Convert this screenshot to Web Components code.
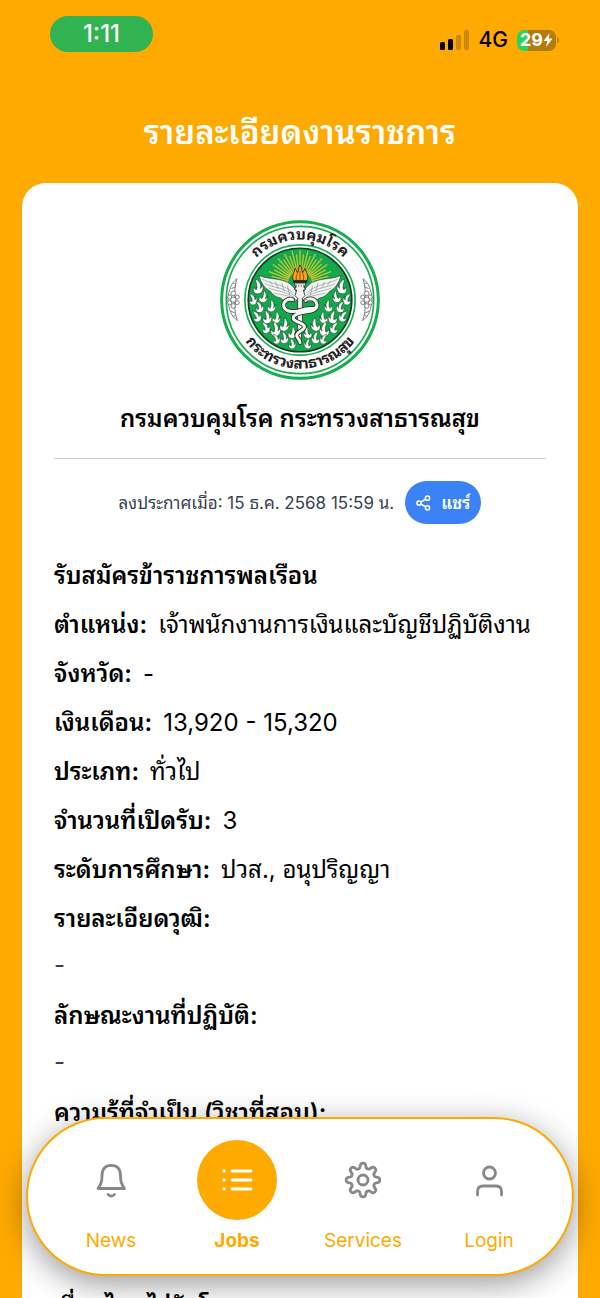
<!DOCTYPE html>
<html lang="th">
<head>
<meta charset="utf-8">
<meta name="viewport" content="width=device-width, initial-scale=1">
<title>รายละเอียดงานราชการ</title>
<style>
  body {
    margin: 0;
    --brand: #ffaa00;
    --share: #3b82f6;
    --muted: #888888;
    color: #000000;
    font-family: Inter, "Noto Sans Thai Looped", "Noto Looped Thai", Loma, "Noto Sans Thai", "Noto Sans", sans-serif;
  }
</style>
</head>
<body>
<app-screen>
  <status-bar slot="header" time="1:11" network="4G" battery="29"></status-bar>
  <page-title slot="header">รายละเอียดงานราชการ</page-title>

  <job-card>
    <dept-emblem slot="logo"></dept-emblem>
    <span slot="org">กรมควบคุมโรค กระทรวงสาธารณสุข</span>
    <span slot="posted">ลงประกาศเมื่อ: 15 ธ.ค. 2568 15:59 น.</span>
    <share-button slot="share">แชร์</share-button>
    <span slot="heading">รับสมัครข้าราชการพลเรือน</span>

    <job-fact label="ตำแหน่ง:">เจ้าพนักงานการเงินและบัญชีปฏิบัติงาน</job-fact>
    <job-fact label="จังหวัด:">-</job-fact>
    <job-fact label="เงินเดือน:">13,920 - 15,320</job-fact>
    <job-fact label="ประเภท:">ทั่วไป</job-fact>
    <job-fact label="จำนวนที่เปิดรับ:">3</job-fact>
    <job-fact label="ระดับการศึกษา:">ปวส., อนุปริญญา</job-fact>

    <job-section label="รายละเอียดวุฒิ:">-</job-section>
    <job-section label="ลักษณะงานที่ปฏิบัติ:">-</job-section>
    <job-section label="ความรู้ที่จำเป็น (วิชาที่สอบ):">-</job-section>
    <job-section label="ทักษะ/สมรรถนะ:">-</job-section>
    <job-section label="เงื่อนไข : ไม่รับโอน">-</job-section>
  </job-card>

  <tab-bar slot="nav">
    <tab-item icon="bell" href="#news">News</tab-item>
    <tab-item icon="list" href="#jobs" active>Jobs</tab-item>
    <tab-item icon="gear" href="#services">Services</tab-item>
    <tab-item icon="person" href="#login">Login</tab-item>
  </tab-bar>
</app-screen>

<script>
// Attaches an open shadow root holding the given markup.
const render = (host, html) => {
  host.attachShadow({ mode: "open" }).innerHTML = html;
};

customElements.define(
  "app-screen",
  class AppScreen extends HTMLElement {
    constructor() {
      super();
      render(this, `
        <style>
          :host {
            display: block;
            position: relative;
            height: 100vh;
            overflow: hidden;
            background: var(--brand);
          }
          .scroll {
            box-sizing: border-box;
            height: 100%;
            overflow-y: auto;
            scrollbar-width: none;
            padding: 0 22px;
          }
          /* the tab bar floats over the scrolling content */
          .nav {
            position: absolute;
            left: 26px;
            right: 26px;
            bottom: 22px;
          }
        </style>
        <div class="scroll">
          <header><slot name="header"></slot></header>
          <main><slot></slot></main>
        </div>
        <div class="nav"><slot name="nav"></slot></div>
      `);
    }
  }
);

customElements.define(
  "status-bar",
  class StatusBar extends HTMLElement {
    constructor() {
      super();
      const time = this.getAttribute("time") ?? "";
      const network = this.getAttribute("network") ?? "";
      const battery = this.getAttribute("battery") ?? "0";
      render(this, `
        <style>
          :host {
            display: flex;
            justify-content: space-between;
            align-items: flex-start;
            padding: 16px 19px 0 28px;
          }
          .time {
            width: 103px;
            border-radius: 18px;
            background: #30b350;
            color: #ffffff;
            font-size: 24px;
            font-weight: 500;
            line-height: 36px;
            text-align: center;
          }
          .right {
            display: flex;
            align-items: center;
            gap: 9px;
            padding-top: 12px;
            font-size: 21px;
            font-weight: 500;
            line-height: 24px;
          }
          .battery {
            display: flex;
            align-items: center;
            gap: 1px;
          }
          .cell {
            display: flex;
            align-items: center;
            justify-content: center;
            width: 39px;
            height: 21px;
            border-radius: 7px;
            background: linear-gradient(to right, #30d158 29%, #b37a0c 29%);
            color: #ffffff;
            font-size: 18px;
            font-weight: 700;
          }
          .cap {
            width: 2px;
            height: 6px;
            border-radius: 0 2px 2px 0;
            background: #c58508;
          }
          svg { display: block; }
        </style>
        <span class="time">${time}</span>
        <div class="right">
          <svg width="30" height="20" viewBox="0 0 30 20" aria-hidden="true">
            <rect x="0" y="12" width="5" height="8" rx="1.5"/>
            <rect x="8" y="9" width="5" height="11" rx="1.5"/>
            <rect x="16" y="5" width="5" height="15" rx="1.5" fill="#cc8a06"/>
            <rect x="24" y="0" width="5" height="20" rx="1.5" fill="#cc8a06"/>
          </svg>
          <span>${network}</span>
          <div class="battery">
            <div class="cell">
              <span>${battery}</span>
              <svg width="10" height="14" viewBox="0 0 10 14" aria-hidden="true">
                <path d="M6.5 0 0.5 8h3.8L3 14l6.5-8.5H5.8z" fill="#fff"/>
              </svg>
            </div>
            <div class="cap"></div>
          </div>
        </div>
      `);
    }
  }
);

customElements.define(
  "page-title",
  class PageTitle extends HTMLElement {
    constructor() {
      super();
      render(this, `
        <style>
          :host { display: block; padding: 56px 0 27px; }
          h1 {
            margin: 0;
            color: #ffffff;
            font-size: 33px;
            line-height: 48px;
            font-weight: 600;
            text-align: center;
          }
        </style>
        <h1><slot></slot></h1>
      `);
    }
  }
);

customElements.define(
  "job-card",
  class JobCard extends HTMLElement {
    constructor() {
      super();
      render(this, `
        <style>
          :host {
            display: block;
            padding: 37px 32px 120px;
            border-radius: 24px 24px 0 0;
            background: #ffffff;
          }
          .org {
            display: flex;
            flex-direction: column;
            align-items: center;
            gap: 20px;
            padding-bottom: 20px;
            border-bottom: 1px solid #cccccc;
          }
          h2, h3 {
            margin: 0;
            font-size: 24px;
            font-weight: 600;
          }
          h2 { line-height: 38px; text-align: center; }
          h3 { line-height: 48px; }
          .meta {
            display: flex;
            justify-content: center;
            align-items: center;
            gap: 11px;
            padding: 22px 0 28px;
            color: #374151;
            font-size: 17px;
            line-height: 24px;
          }
        </style>
        <div class="org">
          <slot name="logo"></slot>
          <h2><slot name="org"></slot></h2>
        </div>
        <div class="meta">
          <slot name="posted"></slot>
          <slot name="share"></slot>
        </div>
        <h3><slot name="heading"></slot></h3>
        <slot></slot>
      `);
    }
  }
);

customElements.define(
  "share-button",
  class ShareButton extends HTMLElement {
    constructor() {
      super();
      render(this, `
        <style>
          :host { display: block; }
          button {
            display: flex;
            align-items: center;
            gap: 10px;
            height: 43px;
            padding: 0 11px;
            border: none;
            border-radius: 22px;
            background: var(--share);
            color: #ffffff;
            font: inherit;
            font-weight: 600;
          }
        </style>
        <button type="button">
          <svg width="15" height="16" viewBox="0 0 15 16" fill="none" stroke="currentColor" stroke-width="1.5" aria-hidden="true">
            <circle cx="3" cy="8" r="2.1"/>
            <circle cx="11.5" cy="3.2" r="2.1"/>
            <circle cx="11.5" cy="12.8" r="2.1"/>
            <path d="M5 7 9.6 4.2M5 9l4.6 2.8"/>
          </svg>
          <slot></slot>
        </button>
      `);
    }
  }
);

customElements.define(
  "job-fact",
  class JobFact extends HTMLElement {
    constructor() {
      super();
      render(this, `
        <style>
          :host { display: block; font-size: 24px; line-height: 49px; }
          dl { display: flex; gap: 11px; margin: 0; }
          dt { font-weight: 600; white-space: nowrap; }
          dd { margin: 0; white-space: nowrap; }
        </style>
        <dl>
          <dt>${this.getAttribute("label")}</dt>
          <dd><slot></slot></dd>
        </dl>
      `);
    }
  }
);

customElements.define(
  "job-section",
  class JobSection extends HTMLElement {
    constructor() {
      super();
      render(this, `
        <style>
          :host { display: block; font-size: 24px; }
          h4 { margin: 0; font-size: 24px; font-weight: 600; line-height: 49px; }
          p { margin: 0 0 4px; color: #374151; font-size: 24px; line-height: 44px; }
        </style>
        <h4>${this.getAttribute("label")}</h4>
        <p><slot></slot></p>
      `);
    }
  }
);

const ICONS = {
  bell: `<path d="M5 26.5C8 22 9 20 9 14C9 7 12.500 3.400 18.200 3.400S27.500 7 27.500 14C27.500 20 28.500 22 31.500 26.500Z"/>
    <path d="M15 32.500c1.500 2 5 2 6.500 0"/>`,
  list: `<path d="M13 9h19M13 18h19M13 27h19"/>
    <path d="M5 9h.01M5 18h.01M5 27h.01" stroke-width="3.500"/>`,
  gear: `<circle cx="18" cy="18" r="5"/><path class="teeth"/>`,
  person: `<circle cx="18.500" cy="11" r="6"/>
    <path d="M6.500 33v-3.500c0-3.500 2-5.500 5.500-5.500h13c3.500 0 5.500 2 5.500 5.500V33"/>`,
};

// Rounded eight-tooth gear outline around the centre (18, 18).
function gearPath() {
  const points = [];
  for (let i = 0; i < 120; i++) {
    const a = (i / 120) * Math.PI * 2;
    const wave = Math.tanh(1.8 * Math.cos(8 * a)) / Math.tanh(1.8);
    const r = 14.4 + 2.4 * wave;
    points.push(`${(18 + r * Math.sin(a)).toFixed(2)} ${(18 - r * Math.cos(a)).toFixed(2)}`);
  }
  return `M${points.join("L")}Z`;
}

customElements.define(
  "tab-bar",
  class TabBar extends HTMLElement {
    constructor() {
      super();
      render(this, `
        <style>
          :host { display: block; }
          nav {
            display: grid;
            grid-template-columns: repeat(4, minmax(0, 1fr));
            padding: 21px 20px;
            border: 2px solid var(--brand);
            border-radius: 80px;
            background: #ffffff;
            box-shadow: 0 8px 32px rgba(0, 0, 0, 0.4);
          }
        </style>
        <nav><slot></slot></nav>
      `);
    }
  }
);

customElements.define(
  "tab-item",
  class TabItem extends HTMLElement {
    constructor() {
      super();
      const active = this.hasAttribute("active");
      render(this, `
        <style>
          :host { display: block; }
          a {
            display: flex;
            flex-direction: column;
            align-items: center;
            gap: 9px;
            color: var(--brand);
            font-size: 19px;
            line-height: 24px;
            text-decoration: none;
          }
          .disc {
            display: grid;
            place-items: center;
            width: 80px;
            height: 80px;
            border-radius: 50%;
            color: var(--muted);
          }
          :host([active]) a { font-weight: 700; }
          :host([active]) .disc { background: var(--brand); color: #ffffff; }
        </style>
        <a href="${this.getAttribute("href")}" ${active ? 'aria-current="page"' : ""}>
          <span class="disc">
            <svg width="36" height="36" viewBox="0 0 36 36" overflow="visible" fill="none" stroke="currentColor"
              stroke-width="2.8" stroke-linecap="round" stroke-linejoin="round" aria-hidden="true">
              ${ICONS[this.getAttribute("icon")]}
            </svg>
          </span>
          <slot></slot>
        </a>
      `);
      this.shadowRoot.querySelector(".teeth")?.setAttribute("d", gearPath());
    }
  }
);

// Sun rays fan out behind the torch.
function rays() {
  let out = "";
  for (let i = 0; i <= 24; i++) {
    const a = Math.PI + (Math.PI * (i + 1)) / 26;
    const r = i % 2 ? 88 : 100;
    out += `M${(269 + 36 * Math.cos(a)).toFixed(1)} ${(222 + 36 * Math.sin(a)).toFixed(1)}`;
    out += `L${(269 + r * Math.cos(a)).toFixed(1)} ${(222 + r * Math.sin(a)).toFixed(1)}`;
  }
  return out;
}

// [x, y, rotation, scale] of each flame on the left half of the seal
const FLAMES = [
  [139, 232, -8, 1], [124, 270, -20, 0.8], [157, 262, 14, 0.8], [144, 293, -18, 0.8],
  [181, 290, 4, 0.8], [136, 322, -30, 0.8], [167, 324, -8, 0.9], [196, 325, 8, 0.8],
  [163, 356, -24, 0.8], [192, 360, -6, 1], [220, 346, 8, 0.9], [195, 390, -24, 0.7],
  [219, 386, -8, 0.8], [244, 370, 10, 0.8], [243, 404, -10, 0.7],
];

customElements.define(
  "dept-emblem",
  class DeptEmblem extends HTMLElement {
    constructor() {
      super();
      const flames = FLAMES.map(
        ([x, y, r, s]) => `<use href="#flame" transform="translate(${x} ${y}) rotate(${r}) scale(${s})"/>`
      ).join("");
      render(this, `
        <style>
          :host { display: block; width: 160px; height: 160px; }
          svg { display: block; width: 100%; height: 100%; }
          text { font-size: 45px; font-weight: 700; fill: #222222; }
        </style>
        <svg viewBox="28 31 482 482" role="img" aria-label="กรมควบคุมโรค กระทรวงสาธารณสุข">
          <defs>
            <path id="top" d="M87 272a182 182 0 0 1 364 0"/>
            <path id="bottom" d="M62 272a207 207 0 0 0 414 0"/>
            <path id="flame" d="M0-24C12-13 15-3 10 6C17 3 17-4 16-8C23 5 15 22 2 22C-12 22-15 9-9-1C-8 6-5 8-2 8C4-1-3-12 0-24Z"
              fill="#fff" stroke="#184a29" stroke-width="2"/>
            <g id="half">
              ${flames}
              <path d="M262 270C246 284 222 276 210 266C196 264 184 254 180 246C164 238 150 220 146 198C174 212 222 204 244 228C256 238 260 250 262 270Z"
                fill="#f4f6f4" stroke="#38423a" stroke-width="2"/>
              <path d="M154 208C178 224 218 222 248 250M163 222C186 236 218 232 250 258M175 236C198 246 222 244 252 265M190 251C210 257 228 255 252 269M176 214l10 14M195 217l9 20M214 220l8 26M231 228l7 30"
                fill="none" stroke="#8b948d" stroke-width="2"/>
            </g>
            <g id="side" fill="#fff" stroke="#666" stroke-width="2.5">
              <path d="M79 208C62 220 54 242 52 270C54 300 62 322 81 334C74 318 72 300 72 272C72 244 73 226 79 208Z"/>
              <circle cx="68" cy="271" r="8"/>
              <circle cx="57" cy="263" r="6"/><circle cx="57" cy="280" r="6"/>
              <circle cx="80" cy="263" r="6"/><circle cx="80" cy="280" r="6"/>
              <circle cx="68" cy="252" r="7"/><circle cx="68" cy="290" r="7"/>
              <path d="M62 238l13-6M60 305l14 7M68 221l7 3M68 321l7-3"/>
            </g>
          </defs>

          <circle cx="269" cy="272" r="236" fill="#fff" stroke="#16ad50" stroke-width="9"/>
          <circle cx="269" cy="272" r="222" fill="none" stroke="#16ad50" stroke-width="5"/>
          <circle cx="269" cy="272" r="166" fill="#fff" stroke="#16ad50" stroke-width="5"/>
          <circle cx="269" cy="272" r="156" fill="#12a84b" stroke="#143d24" stroke-width="5"/>

          <path d="${rays()}" stroke="#c5c52e" stroke-width="4" fill="none"/>
          <use href="#half"/>
          <use href="#half" transform="translate(538 0) scale(-1 1)"/>
          <use href="#side"/>
          <use href="#side" transform="translate(538 0) scale(-1 1)"/>

          <path d="M249 214C243 195 252 190 254 177C259 182 259 187 261 190C266 184 264 174 269 166C276 174 273 184 277 190C280 186 281 182 284 177C288 190 296 196 290 214Z"
            fill="#f5a51d" stroke="#54310b" stroke-width="3"/>
          <path d="M258 212c-2-12 3-15 3-20M269 212v-27M279 212c3-12-1-14-1-20" fill="none" stroke="#a04b10" stroke-width="3"/>
          <path d="M248 213h43v7h-43z" fill="#1d211d"/>
          <path d="M252 221h35l-6 14h3v7h-5l5 17-8 8 1 80-5 45h-6l-5-45 1-80-8-8 5-17h-5v-7h3z"
            fill="#f0f0ed" stroke="#2b322d" stroke-width="2.5"/>
          <path d="M258 225v8M265 225v8M273 225v8M280 225v8" stroke="#555" stroke-width="2"/>

          <!-- the two snakes: dark outline first, then the body -->
          <g fill="none" stroke-linecap="round">
            <path d="M247 271C232 265 217 278 220 291C225 311 258 309 274 302C295 294 324 303 320 286C317 268 299 264 286 273M320 288C318 315 269 302 251 320C239 337 275 338 282 350C286 364 262 365 259 377C258 388 270 391 269 400"
              stroke="#222d25" stroke-width="14"/>
            <path d="M247 271C232 265 217 278 220 291C225 311 258 309 274 302C295 294 324 303 320 286C317 268 299 264 286 273M320 288C318 315 269 302 251 320C239 337 275 338 282 350C286 364 262 365 259 377C258 388 270 391 269 400"
              stroke="#f8f8f4" stroke-width="9"/>
            <path d="M259 273l-11-5M280 273l10-3" stroke="#444" stroke-width="2"/>
          </g>

          <text text-anchor="middle"><textPath href="#top" startOffset="50%">กรมควบคุมโรค</textPath></text>
          <text text-anchor="middle"><textPath href="#bottom" startOffset="50%">กระทรวงสาธารณสุข</textPath></text>
        </svg>
      `);
    }
  }
);
</script>
</body>
</html>
